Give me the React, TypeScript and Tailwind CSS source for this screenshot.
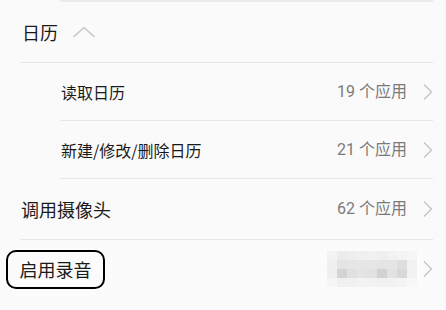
import React from "react";

const font = { fontFamily: '"Noto Sans CJK SC", "Noto Sans", sans-serif' };
const countFont = { fontFamily: 'Roboto, "Noto Sans CJK SC", sans-serif' };

function Chevron() {
  return (
    <svg width="12" height="18" viewBox="0 0 12 18" className="shrink-0">
      <path d="M2 1.5 L9.5 9 L2 16.5" fill="none" stroke="#c4c4c4" strokeWidth="1.4" />
    </svg>
  );
}

function Count({ text }: { text: string }) {
  return (
    <span className="text-[16px] text-[#7a7a7a] leading-none" style={countFont}>
      {text}
    </span>
  );
}

const mosaic = [
  ["#f3f3f3", "#ececec", "#eeeeee", "#f0f0f0", "#f1f1f1", "#eeeeee", "#f2f2f2", "#f4f4f4", "#f6f6f6"],
  ["#f0f0f0", "#e4e4e4", "#e5e5e5", "#e6e6e6", "#e6e6e6", "#e4e4e4", "#e5e5e5", "#dedede", "#f2f2f2"],
  ["#f0f0f0", "#d3d3d3", "#e0e0e0", "#e4e4e4", "#e1e1e1", "#d2d2d2", "#e2e2e2", "#d8d8d8", "#f2f2f2"],
  ["#f6f6f6", "#f0f0f0", "#f1f1f1", "#f3f3f3", "#f2f2f2", "#f1f1f1", "#f2f2f2", "#f4f4f4", "#f8f8f8"],
];

export default function App() {
  return (
    <div className="w-[446px] h-[310px] bg-[#fafafa] overflow-hidden" style={font}>
      <div className="h-[2px] ml-[60px] mr-[13px] bg-[#ebebeb]" />
      {/* 日历 header */}
      <div className="h-[60px] flex items-center pl-[22px]">
        <span className="text-[18px] text-[#1a1a1a] leading-none">日历</span>
        <svg width="24" height="12" viewBox="0 0 24 12" className="ml-[14px]">
          <path d="M1.5 11 L12 1.5 L22.5 11" fill="none" stroke="#c8c8c8" strokeWidth="1.6" />
        </svg>
      </div>
      <div className="h-px ml-[20px] mr-[13px] bg-[#e6e6e6]" />
      {/* 读取日历 */}
      <div className="h-[57px] flex items-center pl-[61px] pr-[12px]">
        <span className="text-[16px] text-[#1a1a1a] leading-none flex-1">读取日历</span>
        <Count text="19 个应用" />
        <div className="ml-[15px]"><Chevron /></div>
      </div>
      <div className="h-px ml-[60px] mr-[13px] bg-[#e6e6e6]" />
      {/* 新建 */}
      <div className="h-[57px] flex items-center pl-[61px] pr-[12px]">
        <span className="text-[16px] text-[#1a1a1a] leading-none flex-1">新建/修改/删除日历</span>
        <Count text="21 个应用" />
        <div className="ml-[15px]"><Chevron /></div>
      </div>
      <div className="h-px ml-[60px] mr-[13px] bg-[#e6e6e6]" />
      {/* 调用摄像头 */}
      <div className="h-[60px] flex items-center pl-[21px] pr-[12px]">
        <span className="text-[18px] text-[#1a1a1a] leading-none flex-1">调用摄像头</span>
        <Count text="62 个应用" />
        <div className="ml-[15px]"><Chevron /></div>
      </div>
      <div className="h-px ml-[20px] mr-[13px] bg-[#e6e6e6]" />
      {/* 启用录音 */}
      <div className="h-[58px] flex items-center pl-[6px] pr-[12px] bg-[#fbfbfb]">
        <div className="flex-1 flex">
          <div className="h-[39px] w-[99px] border-2 border-black rounded-[10px] flex items-center justify-center">
            <span className="text-[18px] text-[#1a1a1a] leading-none">启用录音</span>
          </div>
        </div>
        <div className="grid grid-cols-9 w-[90px]">
          {mosaic.flat().map((c, i) => (
            <div key={i} className="h-[9px]" style={{ backgroundColor: c }} />
          ))}
        </div>
        <div className="ml-[5px]"><Chevron /></div>
      </div>
    </div>
  );
}
